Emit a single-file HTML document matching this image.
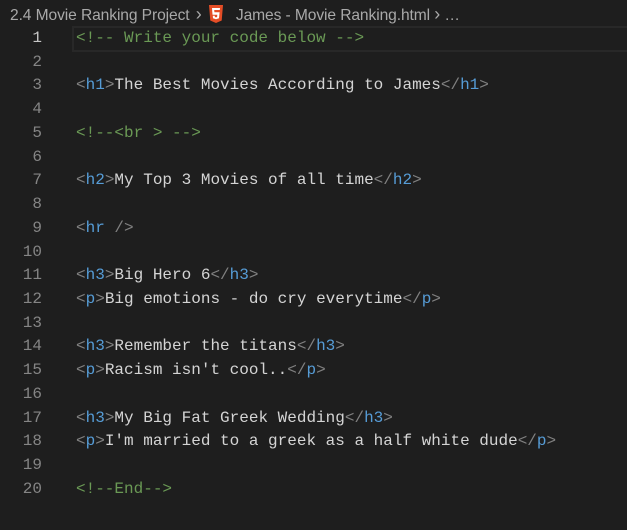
<!DOCTYPE html>
<html><head><style>
body{margin:0;width:627px;height:530px;background:#1e1e1e;overflow:hidden;font-family:"Liberation Mono",monospace;}
.bc{position:absolute;top:0;left:0;height:26px;line-height:28px;font-family:"Liberation Sans",sans-serif;font-size:15.6px;color:#a9a9a9;white-space:nowrap;padding-left:10px;letter-spacing:-0.1px}
.h5{display:inline-block;vertical-align:middle;margin:-3px 8px 0 6px}
.ln{position:absolute;left:0;width:42px;text-align:right;color:#858585;font-size:16px}
.ln.a{color:#c6c6c6}
.code{position:absolute;left:76px;font-size:16px;color:#d4d4d4;white-space:pre}
.row{position:absolute;height:23.7px;line-height:23.7px}
.b{color:#808080}.t{color:#569cd6}.c{color:#6a9955}
.hl{position:absolute;left:72px;top:26px;width:560px;height:22px;border:2px solid #282828}
</style></head><body>
<div class="bc">2.4 Movie Ranking Project <span style="font-size:18px;margin-left:2px">›</span><svg class="h5" width="16" height="18" viewBox="0 0 16 18"><path d="M1 0h14l-1.3 15.5L8 18l-5.7-2.5z" fill="#e44d26"/><path d="M4 3h8l-.2 2H6.2l.2 2.3H11.6l-.6 6L8 14.3l-3-1-.2-2.5h2l.1 1.2L8 12.4l1.1-.4.2-2.3H4.5z" fill="#fff"/></svg> James - Movie Ranking.html <span style="font-size:18px">›</span> …</div>
<div class="hl"></div>
<div id="l"></div>
<script>
const lines=[
'<span class="c">&lt;!-- Write your code below --&gt;</span>','',
'<span class="b">&lt;</span><span class="t">h1</span><span class="b">&gt;</span>The Best Movies According to James<span class="b">&lt;/</span><span class="t">h1</span><span class="b">&gt;</span>','',
'<span class="c">&lt;!--&lt;br &gt; --&gt;</span>','',
'<span class="b">&lt;</span><span class="t">h2</span><span class="b">&gt;</span>My Top 3 Movies of all time<span class="b">&lt;/</span><span class="t">h2</span><span class="b">&gt;</span>','',
'<span class="b">&lt;</span><span class="t">hr</span> <span class="b">/&gt;</span>','',
'<span class="b">&lt;</span><span class="t">h3</span><span class="b">&gt;</span>Big Hero 6<span class="b">&lt;/</span><span class="t">h3</span><span class="b">&gt;</span>',
'<span class="b">&lt;</span><span class="t">p</span><span class="b">&gt;</span>Big emotions - do cry everytime<span class="b">&lt;/</span><span class="t">p</span><span class="b">&gt;</span>','',
'<span class="b">&lt;</span><span class="t">h3</span><span class="b">&gt;</span>Remember the titans<span class="b">&lt;/</span><span class="t">h3</span><span class="b">&gt;</span>',
'<span class="b">&lt;</span><span class="t">p</span><span class="b">&gt;</span>Racism isn\'t cool..<span class="b">&lt;/</span><span class="t">p</span><span class="b">&gt;</span>','',
'<span class="b">&lt;</span><span class="t">h3</span><span class="b">&gt;</span>My Big Fat Greek Wedding<span class="b">&lt;/</span><span class="t">h3</span><span class="b">&gt;</span>',
'<span class="b">&lt;</span><span class="t">p</span><span class="b">&gt;</span>I\'m married to a greek as a half white dude<span class="b">&lt;/</span><span class="t">p</span><span class="b">&gt;</span>','',
'<span class="c">&lt;!--End--&gt;</span>'];
let h='';
lines.forEach((s,i)=>{const y=27+i*23.73;
h+=`<div class="row ln${i==0?' a':''}" style="top:${y}px">${i+1}</div><div class="row code" style="top:${y}px">${s}</div>`;});
document.getElementById('l').innerHTML=h;
</script>
</body></html>
